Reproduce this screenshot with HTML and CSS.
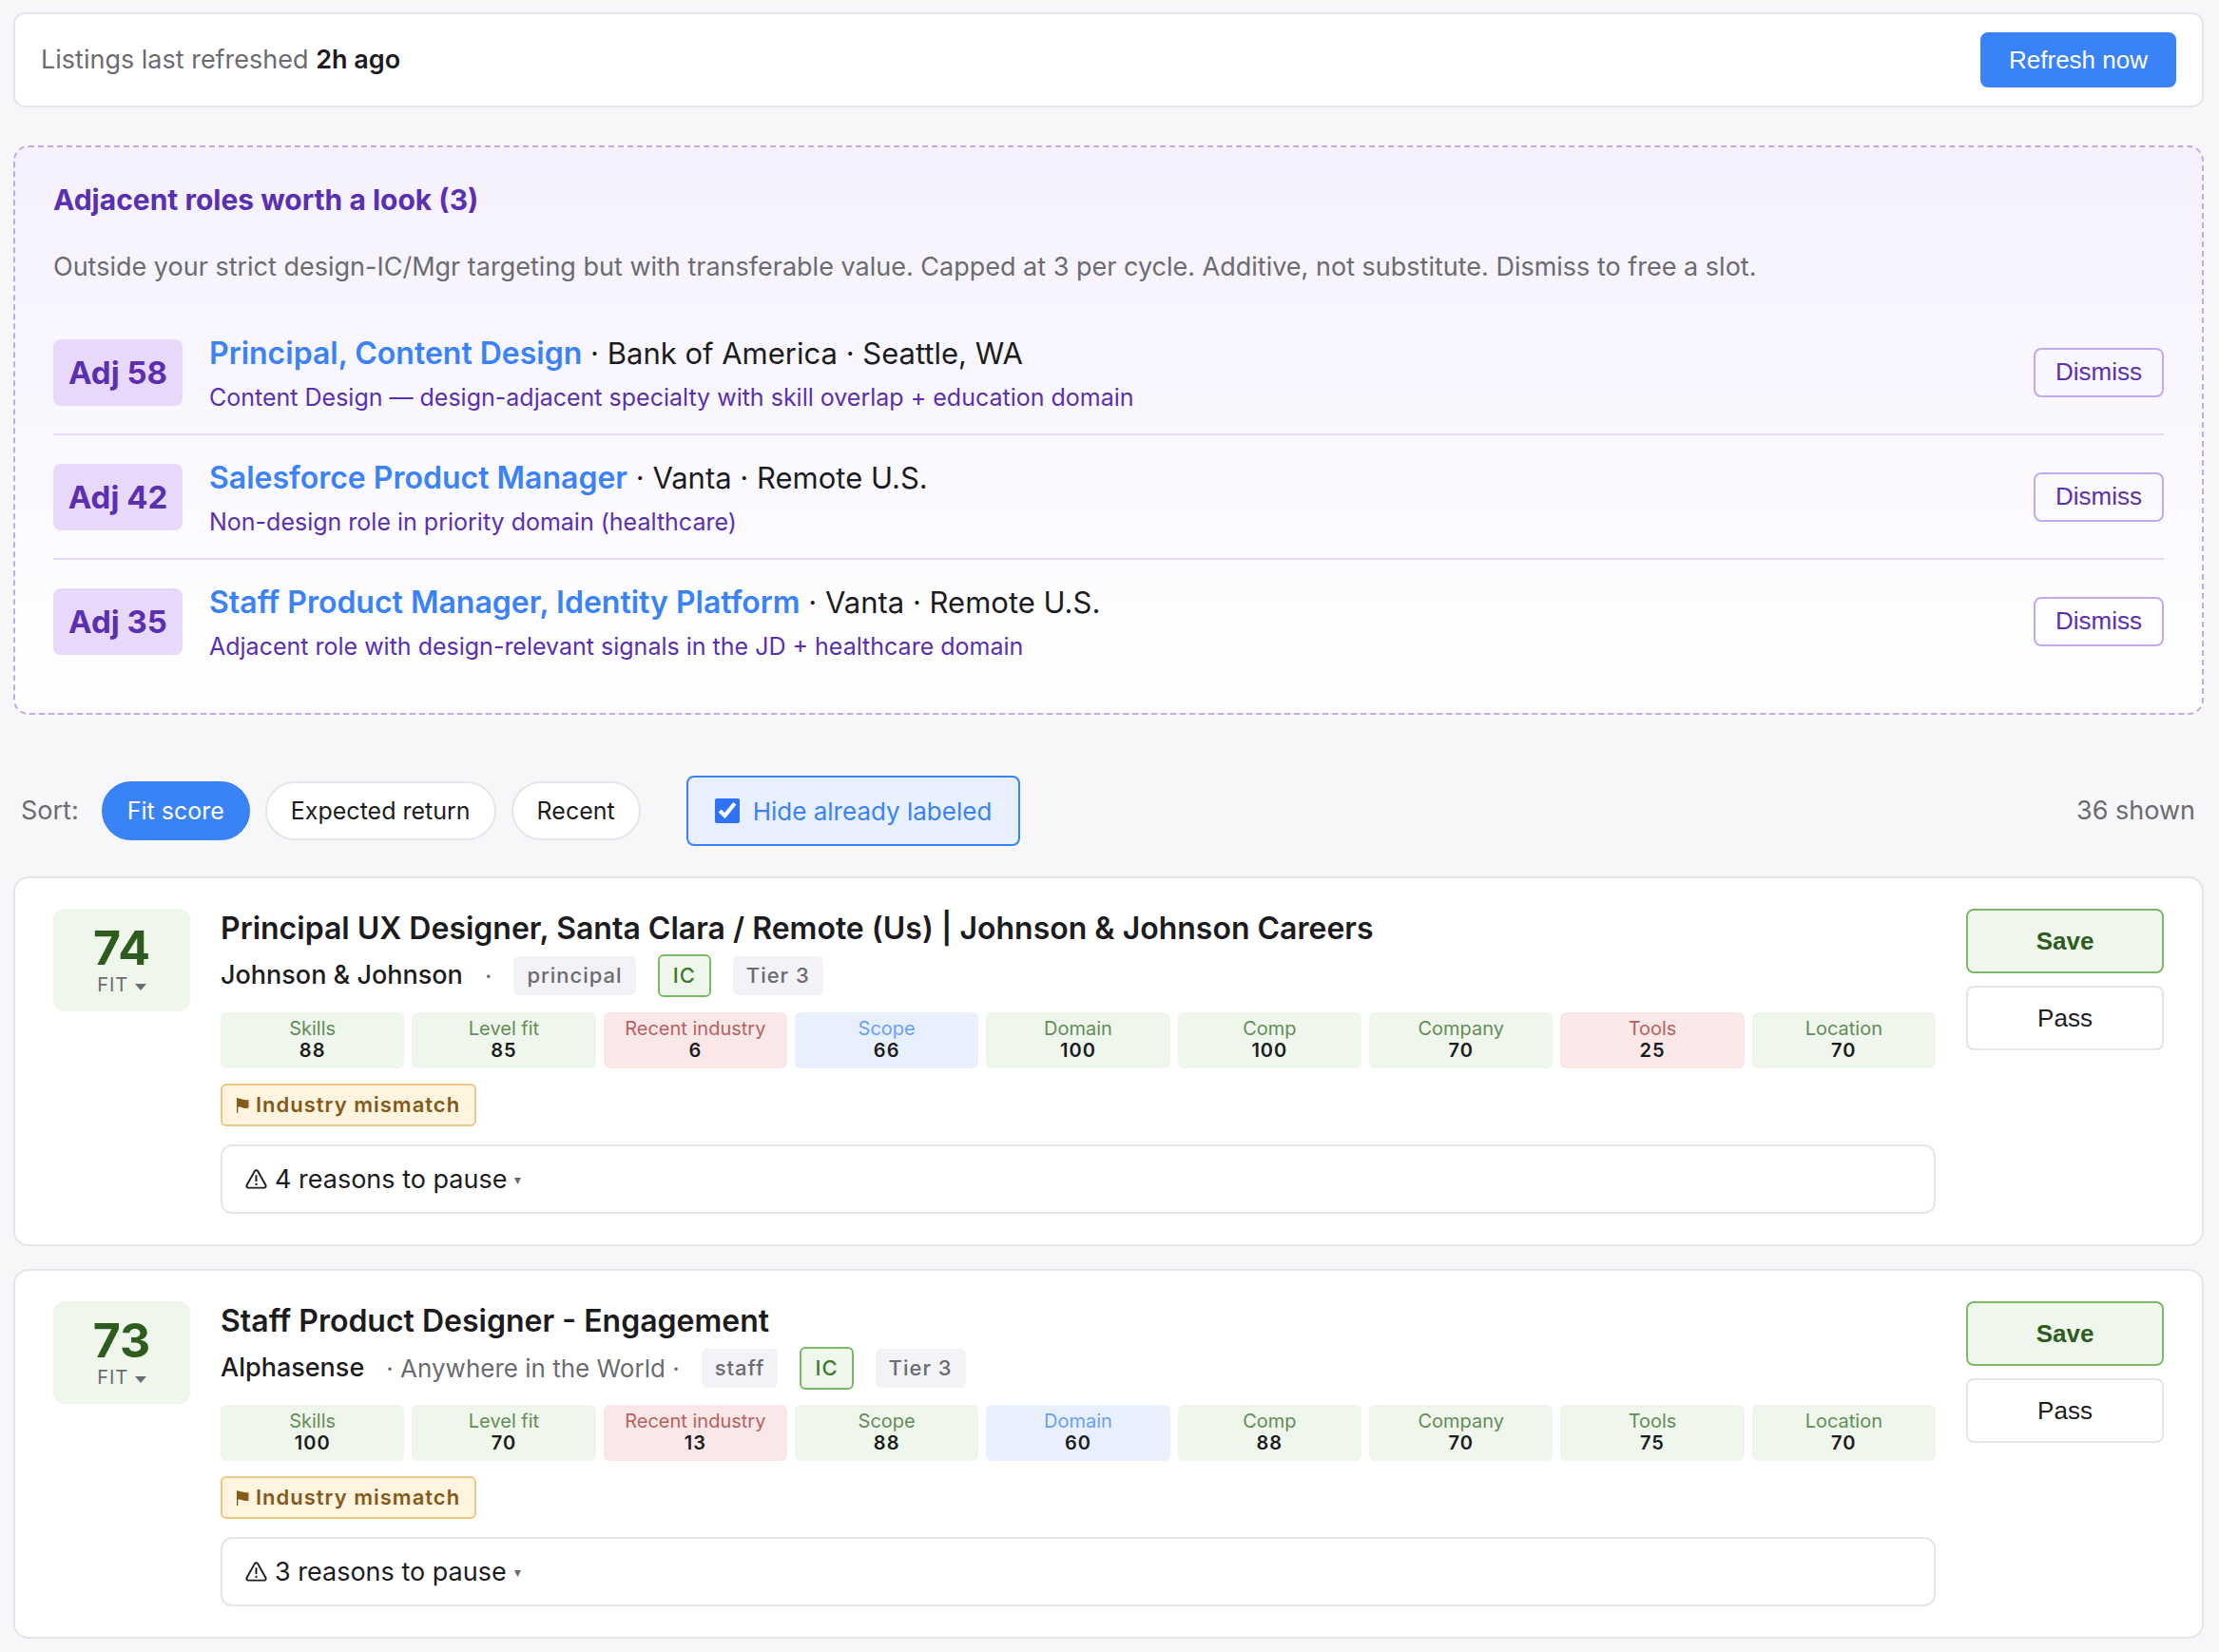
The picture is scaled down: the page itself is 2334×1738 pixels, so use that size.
FILE: index.html
```html
<!DOCTYPE html>
<html lang="en">
<head>
    <meta charset="UTF-8">
    <meta name="viewport" content="width=device-width, initial-scale=1.0">
    <title>Job Listings</title>
    <link rel="stylesheet" href="styles.css">
</head>
<body>
    <div class="refresh-bar">
        <span>Listings last refreshed <strong>2h ago</strong></span>
        <button type="button" class="btn-refresh">Refresh now</button>
    </div>

    <section class="adjacent">
        <h2>Adjacent roles worth a look (3)</h2>
        <p class="adjacent-note">Outside your strict design-IC/Mgr targeting but with transferable value. Capped at 3 per cycle. Additive, not substitute. Dismiss to free a slot.</p>
        <div class="adj-row">
            <span class="adj-score">Adj 58</span>
            <div class="adj-body">
                <div class="adj-title"><a href="#">Principal, Content Design</a> · Bank of America · Seattle, WA</div>
                <div class="adj-reason">Content Design — design-adjacent specialty with skill overlap + education domain</div>
            </div>
            <button type="button" class="btn-dismiss">Dismiss</button>
        </div>
        <div class="adj-row">
            <span class="adj-score">Adj 42</span>
            <div class="adj-body">
                <div class="adj-title"><a href="#">Salesforce Product Manager</a> · Vanta · Remote U.S.</div>
                <div class="adj-reason">Non-design role in priority domain (healthcare)</div>
            </div>
            <button type="button" class="btn-dismiss">Dismiss</button>
        </div>
        <div class="adj-row">
            <span class="adj-score">Adj 35</span>
            <div class="adj-body">
                <div class="adj-title"><a href="#">Staff Product Manager, Identity Platform</a> · Vanta · Remote U.S.</div>
                <div class="adj-reason">Adjacent role with design-relevant signals in the JD + healthcare domain</div>
            </div>
            <button type="button" class="btn-dismiss">Dismiss</button>
        </div>
    </section>

    <div class="controls">
        <span class="sort-label">Sort:</span>
        <div class="pills">
            <button type="button" class="pill active">Fit score</button>
            <button type="button" class="pill">Expected return</button>
            <button type="button" class="pill">Recent</button>
        </div>
        <label class="toggle" for="hideLabeled">
            <input type="checkbox" id="hideLabeled" checked>
            Hide already labeled
        </label>
        <span class="count">36 shown</span>
    </div>

    <article class="card">
        <div class="fit">
            <div class="fit-num">74</div>
            <div class="fit-label">FIT <svg class="caret" viewBox="0 0 12 7"><path d="M0 0h12L6 7z"/></svg></div>
        </div>
        <div class="card-main">
            <h3>Principal UX Designer, Santa Clara / Remote (Us) | Johnson &amp; Johnson Careers</h3>
            <div class="meta">
                <span class="company">Johnson &amp; Johnson</span>
                <span>·</span>
                <span class="tag">principal</span>
                <span class="tag tag-ic">IC</span>
                <span class="tag">Tier 3</span>
            </div>
            <div class="metrics">
                <div class="metric good"><span>Skills</span><b>88</b></div>
                <div class="metric good"><span>Level fit</span><b>85</b></div>
                <div class="metric bad"><span>Recent industry</span><b>6</b></div>
                <div class="metric mid"><span>Scope</span><b>66</b></div>
                <div class="metric good"><span>Domain</span><b>100</b></div>
                <div class="metric good"><span>Comp</span><b>100</b></div>
                <div class="metric good"><span>Company</span><b>70</b></div>
                <div class="metric bad"><span>Tools</span><b>25</b></div>
                <div class="metric good"><span>Location</span><b>70</b></div>
            </div>
            <div class="flag">
                <svg class="flag-icon" viewBox="0 0 13 16"><path d="M0 0h1.300v.8C5 .6 7 3 12.500 2.200v8.600C7 11.600 5 9 1.300 9.600V16H0z"/></svg>
                Industry mismatch
            </div>
            <button type="button" class="pause">
                <svg class="warn-icon" viewBox="0 0 24 22"><path d="M10.3 2.200 1.500 17.800A2 2 0 0 0 3.200 20.600H20.800A2 2 0 0 0 22.500 17.800L13.700 2.200A2 2 0 0 0 10.300 2.200z"/><path d="M12 6.500v7M12 15.500v2.300"/></svg>
                4 reasons to pause
                <svg class="pause-caret" viewBox="0 0 7 7"><path d="M0 0h7L3.500 7z"/></svg>
            </button>
        </div>
        <div class="actions">
            <button type="button" class="btn-save">Save</button>
            <button type="button" class="btn-pass">Pass</button>
        </div>
    </article>

    <article class="card">
        <div class="fit">
            <div class="fit-num">73</div>
            <div class="fit-label">FIT <svg class="caret" viewBox="0 0 12 7"><path d="M0 0h12L6 7z"/></svg></div>
        </div>
        <div class="card-main">
            <h3>Staff Product Designer - Engagement</h3>
            <div class="meta">
                <span class="company">Alphasense</span>
                <span>· Anywhere in the World ·</span>
                <span class="tag">staff</span>
                <span class="tag tag-ic">IC</span>
                <span class="tag">Tier 3</span>
            </div>
            <div class="metrics">
                <div class="metric good"><span>Skills</span><b>100</b></div>
                <div class="metric good"><span>Level fit</span><b>70</b></div>
                <div class="metric bad"><span>Recent industry</span><b>13</b></div>
                <div class="metric good"><span>Scope</span><b>88</b></div>
                <div class="metric mid"><span>Domain</span><b>60</b></div>
                <div class="metric good"><span>Comp</span><b>88</b></div>
                <div class="metric good"><span>Company</span><b>70</b></div>
                <div class="metric good"><span>Tools</span><b>75</b></div>
                <div class="metric good"><span>Location</span><b>70</b></div>
            </div>
            <div class="flag">
                <svg class="flag-icon" viewBox="0 0 13 16"><path d="M0 0h1.300v.8C5 .6 7 3 12.500 2.200v8.600C7 11.600 5 9 1.300 9.600V16H0z"/></svg>
                Industry mismatch
            </div>
            <button type="button" class="pause">
                <svg class="warn-icon" viewBox="0 0 24 22"><path d="M10.3 2.200 1.500 17.800A2 2 0 0 0 3.200 20.600H20.800A2 2 0 0 0 22.500 17.800L13.700 2.200A2 2 0 0 0 10.300 2.200z"/><path d="M12 6.500v7M12 15.500v2.300"/></svg>
                3 reasons to pause
                <svg class="pause-caret" viewBox="0 0 7 7"><path d="M0 0h7L3.500 7z"/></svg>
            </button>
        </div>
        <div class="actions">
            <button type="button" class="btn-save">Save</button>
            <button type="button" class="btn-pass">Pass</button>
        </div>
    </article>
</body>
</html>
```
FILE: styles.css
```css
* {
    box-sizing: border-box;
}

body {
    margin: 0;
    padding: 13px 16px 14px 14px;
    font-family: Inter, "Liberation Sans", sans-serif;
    font-size: 27px;
    line-height: 1.5;
    color: #1c1c1e;
    background-color: #f7f7f9;
}

button {
    font-family: "Liberation Sans", Arial, sans-serif;
    font-size: 26px;
    cursor: pointer;
}

/* Refresh bar */
.refresh-bar {
    display: flex;
    align-items: center;
    justify-content: space-between;
    height: 100px;
    padding: 0 27px;
    margin-bottom: 40px;
    background-color: #fff;
    border: 2px solid #e5e5ea;
    border-radius: 12px;
    color: #6b6b70;
}

.refresh-bar strong {
    font-weight: 600;
    color: #1c1c1e;
}

.btn-refresh {
    height: 58px;
    padding: 0 30px;
    border: none;
    border-radius: 8px;
    background-color: #3a82f7;
    color: #fff;
}

/* Adjacent roles */
.adjacent {
    padding: 32px 40px;
    margin-bottom: 64px;
    border: 2px dashed #c4a8ec;
    border-radius: 16px;
    background: linear-gradient(180deg, #f5f1fe, #fff);
}

.adjacent h2 {
    margin: 0 0 26px;
    font-size: 30px;
    line-height: 46px;
    font-weight: 700;
    color: #5a2fb0;
}

.adjacent-note {
    margin: 0 0 24px;
    line-height: 44px;
    color: #6b6b70;
}

.adj-row {
    display: flex;
    align-items: center;
    gap: 28px;
    padding: 20px 0;
    border-bottom: 2px solid #e8d9fb;
}

.adj-row:last-child {
    border-bottom: none;
}

.adj-score {
    width: 136px;
    border-radius: 8px;
    background-color: #e8d9fb;
    color: #5a2fb0;
    font-size: 33px;
    font-weight: 700;
    line-height: 70px;
    text-align: center;
}

.adj-body {
    flex: 1;
}

.adj-title {
    font-size: 31px;
    line-height: 49px;
}

.adj-title a {
    color: #3a82f7;
    font-size: 32px;
    font-weight: 600;
    text-decoration: none;
}

.adj-reason {
    margin-top: 4px;
    font-size: 25px;
    line-height: 36px;
    color: #5a2fb0;
}

.btn-dismiss {
    height: 52px;
    padding: 0 21px;
    border: 2px solid #c4a8ec;
    border-radius: 8px;
    background-color: transparent;
    color: #5a2fb0;
}

/* Sort and filter controls */
.controls {
    display: flex;
    align-items: center;
    padding: 0 9px 0 8px;
    margin-bottom: 32px;
    color: #6b6b70;
}

.pills {
    display: flex;
    gap: 16px;
    margin: 0 48px 0 24px;
}

.pill {
    height: 62px;
    padding: 0 25px;
    border: 2px solid #e5e5ea;
    border-radius: 31px;
    background-color: #fff;
    color: #1c1c1e;
    font-family: inherit;
    font-size: 25px;
}

.pill.active {
    border-color: #3a82f7;
    background-color: #3a82f7;
    color: #fff;
}

.toggle {
    display: flex;
    align-items: center;
    gap: 14px;
    height: 74px;
    padding: 0 28px;
    border: 2px solid #3a82f7;
    border-radius: 8px;
    background-color: #e8f0fe;
    color: #3a82f7;
    font-size: 26px;
}

.toggle input {
    width: 26px;
    height: 26px;
    margin: 0;
    accent-color: #3072f6;
}

.count {
    margin-left: auto;
}

/* Listing cards */
.card {
    display: flex;
    align-items: flex-start;
    gap: 32px;
    padding: 32px 40px;
    margin-bottom: 24px;
    background-color: #fff;
    border: 2px solid #e5e5ea;
    border-radius: 16px;
}

.card:last-child {
    margin-bottom: 0;
}

.fit {
    width: 144px;
    height: 108px;
    padding-top: 14px;
    border-radius: 12px;
    background-color: #eff7ec;
    text-align: center;
}

.fit-num {
    font-size: 50px;
    line-height: 54px;
    font-weight: 700;
    color: #2d5c1e;
}

.fit-label {
    font-size: 20px;
    line-height: 24px;
    letter-spacing: 1px;
    color: #6b6b70;
}

.caret {
    width: 12px;
    height: 9px;
    fill: #6b6b70;
}

.card-main {
    flex: 1;
    min-width: 0;
}

.card h3 {
    margin: 0 0 5px;
    font-size: 32px;
    line-height: 42px;
    font-weight: 600;
}

.meta {
    display: flex;
    align-items: center;
    gap: 23px;
    height: 46px;
    margin-bottom: 16px;
    font-size: 26px;
    color: #6b6b70;
}

.company {
    font-size: 27px;
    font-weight: 500;
    color: #1c1c1e;
}

.tag {
    padding: 0 14px;
    border-radius: 6px;
    background-color: #f2f2f7;
    font-size: 22px;
    line-height: 41px;
    font-weight: 500;
    letter-spacing: 1px;
}

.tag-ic {
    border: 2px solid #7db86a;
    background-color: #eff7ec;
    color: #3c7a2a;
}

.metrics {
    display: grid;
    grid-template-columns: repeat(9, 1fr);
    gap: 8px;
    margin-bottom: 16px;
}

.metric {
    display: flex;
    flex-direction: column;
    padding: 6px 0 7px;
    border-radius: 6px;
    font-size: 20px;
    line-height: 23px;
    text-align: center;
}

.metric b {
    font-weight: 600;
    letter-spacing: 1px;
    color: #1c1c1e;
}

.good {
    background-color: #eff7ec;
    color: #648c58;
}

.bad {
    background-color: #fae8e8;
    color: #b86060;
}

.mid {
    background-color: #e8f0fe;
    color: #6a9ff8;
}

.flag {
    display: flex;
    align-items: center;
    gap: 7px;
    width: fit-content;
    height: 45px;
    padding: 0 15px;
    margin-bottom: 19px;
    border: 2px solid #edc885;
    border-radius: 6px;
    background-color: #fef4e0;
    color: #855a18;
    font-size: 22px;
    font-weight: 600;
    letter-spacing: 1px;
}

.flag-icon {
    width: 13px;
    height: 16px;
    fill: #855a18;
}

.pause {
    display: flex;
    align-items: center;
    gap: 8px;
    width: 100%;
    height: 73px;
    padding: 0 24px;
    border: 2px solid #e5e5ea;
    border-radius: 12px;
    background-color: #fff;
    color: #1c1c1e;
    font-family: inherit;
    font-size: 27px;
}

.warn-icon {
    width: 23px;
    height: 21px;
    fill: none;
    stroke: #1c1c1e;
    stroke-width: 2;
}

.pause-caret {
    width: 7px;
    height: 7px;
    margin-top: 3px;
    fill: #6b6b70;
}

.actions {
    display: flex;
    flex-direction: column;
    gap: 13px;
    width: 208px;
}

.btn-save,
.btn-pass {
    height: 68px;
    border: 2px solid #e5e5ea;
    border-radius: 8px;
    background-color: #fff;
    color: #1c1c1e;
}

.btn-save {
    border-color: #7db86a;
    background-color: #eff7ec;
    color: #2d5c1e;
    font-weight: 700;
}
```
